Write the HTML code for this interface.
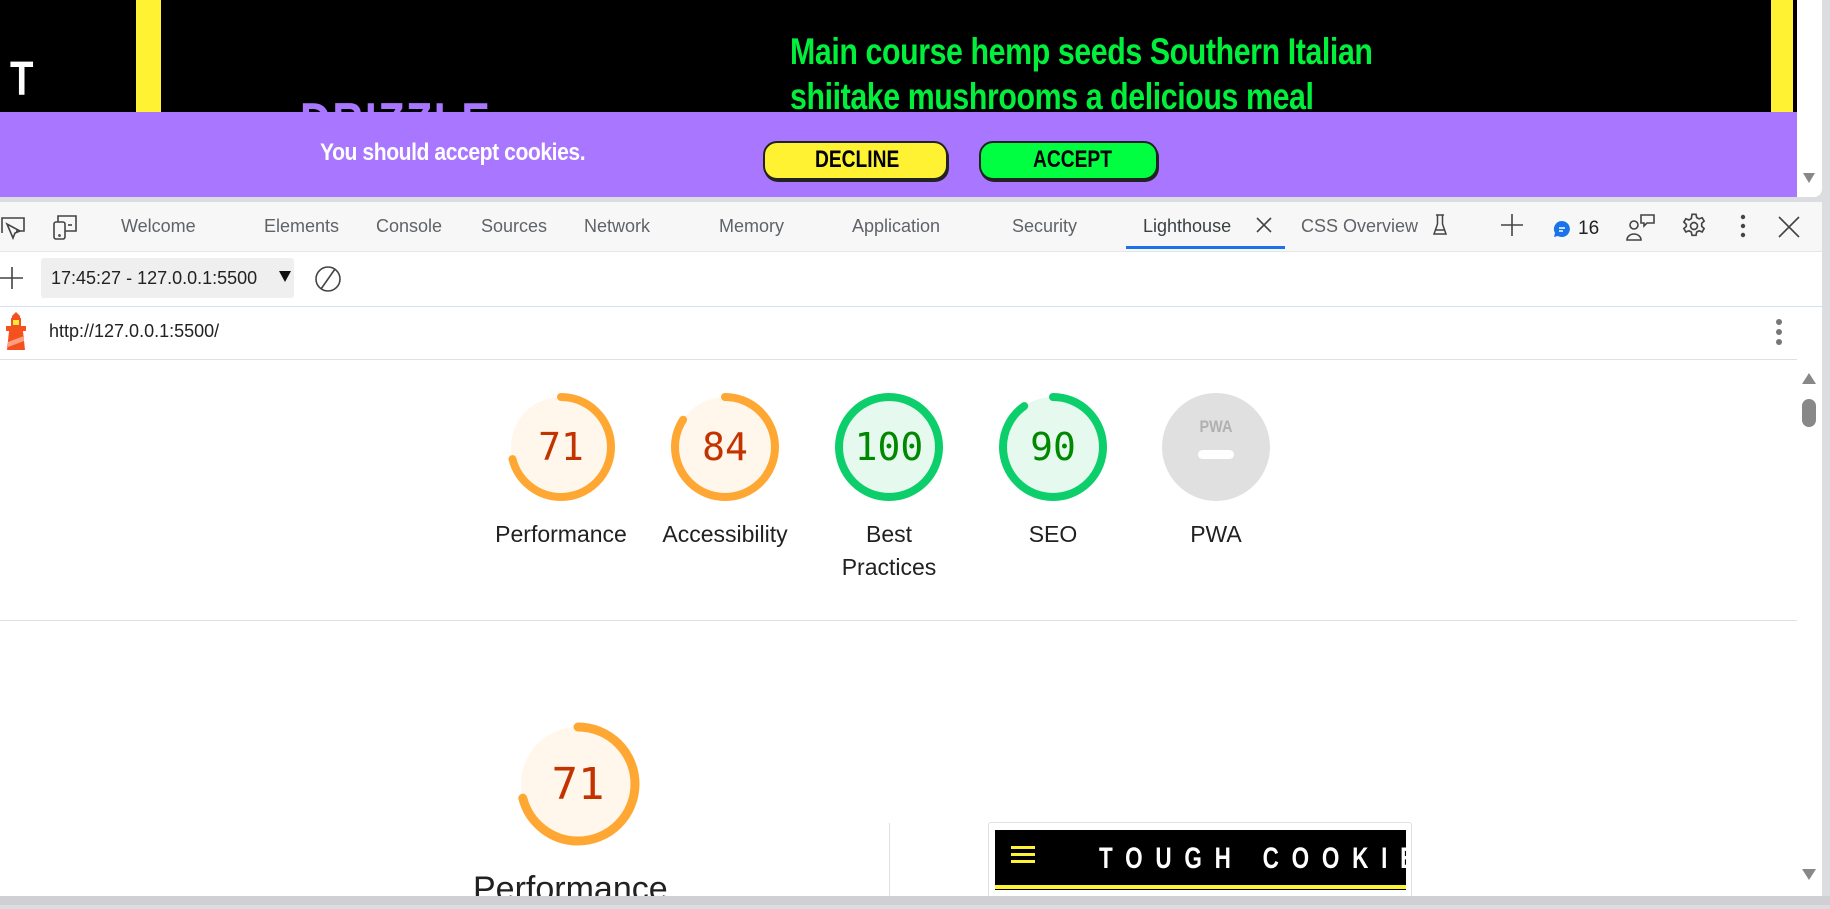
<!DOCTYPE html>
<html><head><meta charset="utf-8"><style>
*{margin:0;padding:0;box-sizing:border-box}
body{width:1830px;height:905px;overflow:hidden;background:#dcdde0;font-family:"Liberation Sans",Arial,sans-serif;position:relative}
.a{position:absolute}
.narrow{font-family:"Liberation Sans",sans-serif;font-weight:bold;transform-origin:0 0;white-space:nowrap}
.tab{position:absolute;top:216px;font-size:18px;color:#5f6368;white-space:nowrap}
.lbl{position:absolute;width:170px;text-align:center;font-size:23px;color:#212121;line-height:33px}
.num{position:absolute;width:120px;text-align:center;font-family:"DejaVu Sans Mono","Liberation Mono",monospace;font-size:38px;line-height:40px}
</style></head><body>
<!-- page -->
<div class="a" style="left:0;top:0;width:1797px;height:112px;background:#000;overflow:hidden">
  <div class="a" style="left:136px;top:0;width:25px;height:112px;background:#fff233"></div>
  <div class="a" style="left:1771px;top:0;width:22px;height:112px;background:#fff233"></div>
  <div class="a" style="left:10px;top:52px;color:#fff;font-size:48px;font-weight:bold;transform:scaleX(0.8);transform-origin:0 0">T</div>
  <div class="a narrow" style="left:300px;top:92px;color:#a977ff;font-size:52px;letter-spacing:2px;transform:scaleX(0.82)">DRIZZLE</div>
  <div class="a narrow" style="left:790px;top:29px;color:#00f03c;font-size:37px;line-height:45px;letter-spacing:-0.5px;transform:scaleX(0.82)">Main course hemp seeds Southern Italian<br>shiitake mushrooms a delicious meal</div>
</div>
<div class="a" style="left:0;top:112px;width:1797px;height:85px;background:#a977ff">
  <div class="a narrow" style="left:320px;top:27px;color:#fff;font-size:24px;letter-spacing:-0.5px;transform:scaleX(0.88)">You should accept cookies.</div>
  <div class="a" style="left:763px;top:29px;width:185px;height:39px;background:#fff233;border:2px solid #222;border-radius:14px;box-shadow:1px 2px 0 #222"></div>
  <div class="a narrow" style="left:815px;top:34px;font-size:24px;color:#000;transform:scaleX(0.8)">DECLINE</div>
  <div class="a" style="left:979px;top:29px;width:179px;height:39px;background:#00ff40;border:2px solid #222;border-radius:14px;box-shadow:1px 2px 0 #222"></div>
  <div class="a narrow" style="left:1033px;top:34px;font-size:24px;color:#000;transform:scaleX(0.8)">ACCEPT</div>
</div>
<div class="a" style="left:1797px;top:0;width:25px;height:197px;background:#fff;border-radius:0 0 8px 0"></div>
<div class="a" style="left:1803px;top:173px;width:0;height:0;border-left:6px solid transparent;border-right:6px solid transparent;border-top:10px solid #888"></div>
<!-- devtools -->
<div class="a" style="left:0;top:202px;width:1822px;height:703px;background:#fff"></div>
<div class="a" style="left:0;top:202px;width:1822px;height:50px;background:#f7f7f7;border-bottom:1px solid #e6e6e6"></div>
<svg class="a" style="left:0;top:213px" width="80" height="28" viewBox="0 0 80 28" fill="none" stroke="#444" stroke-width="1.6">
<path d="M2 20 V5 H24 V18 H16"/><path d="M7 11 l6 14 2-5 5-2z"/>
<rect x="54" y="9" width="11" height="17" rx="2"/><path d="M58 9 V3 H76 V18 H65"/><path d="M68 12 h4"/><circle cx="59.5" cy="22.5" r=".6"/>
</svg>
<div class="tab" style="left:121px">Welcome</div>
<div class="tab" style="left:264px">Elements</div>
<div class="tab" style="left:376px">Console</div>
<div class="tab" style="left:481px">Sources</div>
<div class="tab" style="left:584px">Network</div>
<div class="tab" style="left:719px">Memory</div>
<div class="tab" style="left:852px">Application</div>
<div class="tab" style="left:1012px">Security</div>
<div class="tab" style="left:1143px;color:#3c4043">Lighthouse</div>
<svg class="a" style="left:1255px;top:216px" width="18" height="18" stroke="#444" stroke-width="1.6"><path d="M2 2L16 16M16 2L2 16"/></svg>
<div class="a" style="left:1126px;top:246px;width:159px;height:3px;background:#1a73e8"></div>
<div class="tab" style="left:1301px">CSS Overview</div>
<svg class="a" style="left:1432px;top:213px" width="16" height="24" fill="none" stroke="#444" stroke-width="1.5"><path d="M4 2h8M5.5 2v9L2 21h12L10.5 11V2M3.5 17h9"/></svg>
<svg class="a" style="left:1500px;top:213px" width="24" height="24" stroke="#444" stroke-width="1.6"><path d="M12 1v22M1 12h22"/></svg>
<svg class="a" style="left:1553px;top:220px" width="18" height="18"><path d="M9 1a8 8 0 1 1-4 15l-4 1 1-4A8 8 0 0 1 9 1z" fill="#1a73e8"/><path d="M6 8h6M6 11h4" stroke="#fff" stroke-width="1.4"/></svg>
<div class="a" style="left:1578px;top:218px;font-size:19px;color:#222">16</div>
<svg class="a" style="left:1626px;top:212px" width="30" height="30" fill="none" stroke="#444" stroke-width="1.6"><circle cx="8" cy="13" r="4"/><path d="M1 28a7 6 0 0 1 14 0z"/><path d="M15 3h13v8h-7l-3 3v-3h-3z"/></svg>
<svg class="a" style="left:1680px;top:212px" width="28" height="28" viewBox="0 0 24 24" fill="none" stroke="#444" stroke-width="1.4"><circle cx="12" cy="12" r="3"/><path d="M10.3 2h3.4l.6 2.8 2 1.1 2.7-1 1.7 2.9-2.1 1.9v2.6l2.1 1.9-1.7 2.9-2.7-1-2 1.1-.6 2.8h-3.4l-.6-2.8-2-1.1-2.7 1-1.7-2.9 2.1-1.9V10.6L3.3 8.7 5 5.8l2.7 1 2-1.1z"/></svg>
<svg class="a" style="left:1740px;top:214px" width="6" height="24" fill="#444"><circle cx="3" cy="3" r="2.2"/><circle cx="3" cy="12" r="2.2"/><circle cx="3" cy="21" r="2.2"/></svg>
<svg class="a" style="left:1778px;top:216px" width="22" height="22" stroke="#444" stroke-width="1.6"><path d="M1 1L21 21M21 1L1 21"/></svg>
<!-- row 2 -->
<div class="a" style="left:0;top:306px;width:1822px;height:1px;background:#d6e0f0"></div>
<svg class="a" style="left:0;top:266px" width="24" height="24" stroke="#444" stroke-width="1.6"><path d="M12 1v22M0 12h23"/></svg>
<div class="a" style="left:41px;top:258px;width:253px;height:40px;background:#efefef;border-radius:3px"></div>
<div class="a" style="left:51px;top:268px;font-size:18px;color:#222">17:45:27 - 127.0.0.1:5500</div>
<div class="a" style="left:279px;top:271px;width:0;height:0;border-left:6px solid transparent;border-right:6px solid transparent;border-top:11px solid #111"></div>
<svg class="a" style="left:313px;top:264px" width="30" height="30" fill="none" stroke="#444" stroke-width="1.6"><circle cx="15" cy="15" r="12"/><path d="M22 5L8 25"/></svg>
<!-- url row -->
<div class="a" style="left:0;top:359px;width:1797px;height:1px;background:#e0e0e0"></div>
<svg class="a" style="left:3px;top:312px" width="26" height="40"><path d="M9 4 L13 0 L17 4 V8 H9z" fill="#f4511e"/><rect x="9" y="7" width="8" height="7" fill="#ffeb3b" stroke="#f4511e" stroke-width="2"/><rect x="3" y="14" width="20" height="5" fill="#f4511e"/><path d="M6 19h14l2 19H4z" fill="#f4511e"/><path d="M5 30l16-6v5L5 35z" fill="#ff9e80"/></svg>
<div class="a" style="left:49px;top:321px;font-size:18px;color:#222">http://127.0.0.1:5500/</div>
<svg class="a" style="left:1774px;top:318px" width="10" height="28" fill="#777"><circle cx="5" cy="4" r="3"/><circle cx="5" cy="14" r="3"/><circle cx="5" cy="24" r="3"/></svg>
<!-- scrollbar -->
<div class="a" style="left:1797px;top:360px;width:25px;height:536px;background:#fff"></div>
<div class="a" style="left:1802px;top:373px;width:0;height:0;border-left:7px solid transparent;border-right:7px solid transparent;border-bottom:11px solid #888"></div>
<div class="a" style="left:1802px;top:399px;width:14px;height:28px;background:#888;border-radius:7px"></div>
<div class="a" style="left:1802px;top:869px;width:0;height:0;border-left:7px solid transparent;border-right:7px solid transparent;border-top:11px solid #888"></div>
<!-- gauges -->
<svg class="a" style="left:0;top:360px" width="1797" height="460">
 <g fill="none" stroke-width="8">
  <circle cx="561" cy="87" r="50" fill="#fff7eb" stroke="none"/>
  <circle cx="561" cy="87" r="50" stroke="#ffa733" stroke-dasharray="223 314" transform="rotate(-90 561 87)" stroke-linecap="round"/>
  <circle cx="725" cy="87" r="50" fill="#fff7eb" stroke="none"/>
  <circle cx="725" cy="87" r="50" stroke="#ffa733" stroke-dasharray="264 314" transform="rotate(-90 725 87)" stroke-linecap="round"/>
  <circle cx="889" cy="87" r="50" fill="#e5f9ee" stroke="#0cce6b"/>
  <circle cx="1053" cy="87" r="50" fill="#e5f9ee" stroke="none"/>
  <circle cx="1053" cy="87" r="50" stroke="#0cce6b" stroke-dasharray="283 314" transform="rotate(-90 1053 87)" stroke-linecap="round"/>
  <circle cx="1216" cy="87" r="54" fill="#e0e0e0" stroke="none"/>
 </g>
 <rect x="1198" y="90" width="36" height="9" rx="4.5" fill="#fff"/>
 <text x="1216" y="72" text-anchor="middle" font-family="Liberation Sans,sans-serif" font-weight="bold" font-size="17" fill="#b0b0b0" transform="translate(1216 0) scale(0.85 1) translate(-1216 0)">PWA</text>
</svg>
<div class="num" style="left:501px;top:427px;color:#c33300">71</div>
<div class="num" style="left:665px;top:427px;color:#c33300">84</div>
<div class="num" style="left:829px;top:427px;color:#008800">100</div>
<div class="num" style="left:993px;top:427px;color:#008800">90</div>
<div class="lbl" style="left:476px;top:518px">Performance</div>
<div class="lbl" style="left:640px;top:518px">Accessibility</div>
<div class="lbl" style="left:804px;top:518px">Best<br>Practices</div>
<div class="lbl" style="left:968px;top:518px">SEO</div>
<div class="lbl" style="left:1131px;top:518px">PWA</div>
<div class="a" style="left:0;top:620px;width:1797px;height:1px;background:#e0e0e0"></div>
<!-- big gauge -->
<svg class="a" style="left:500px;top:720px" width="160" height="140" fill="none" stroke-width="9">
 <circle cx="78" cy="64" r="57" fill="#fff7eb"/>
 <circle cx="78" cy="64" r="57" stroke="#ffa733" stroke-dasharray="254 358" transform="rotate(-90 78 64)" stroke-linecap="round"/>
</svg>
<div class="num" style="left:518px;top:762px;color:#c33300;font-size:44px;line-height:46px">71</div>
<div class="a" style="left:473px;top:870px;font-size:34px;color:#212121">Performance</div>
<div class="a" style="left:889px;top:823px;width:1px;height:73px;background:#e0e0e0"></div>
<div class="a" style="left:988px;top:822px;width:424px;height:80px;border:1px solid #e0e0e0;border-radius:3px;background:#fff"></div>
<div class="a" style="left:995px;top:830px;width:411px;height:60px;background:#000;overflow:hidden">
 <div class="a" style="left:16px;top:16px;width:24px;height:3px;background:#fff233;box-shadow:0 7px 0 #fff233,0 14px 0 #fff233"></div>
 <div class="a" style="left:104px;top:12px;color:#fff;font-family:'Liberation Sans',sans-serif;font-weight:bold;font-size:30px;letter-spacing:17px;white-space:nowrap;transform:scaleX(0.75);transform-origin:0 0">TOUGH COOKIE</div>
 <div class="a" style="left:0;top:55px;width:411px;height:4px;background:#fff233"></div>
</div>
<div class="a" style="left:0;top:896px;width:1830px;height:9px;background:#d0d0d4"></div>
</body></html>
